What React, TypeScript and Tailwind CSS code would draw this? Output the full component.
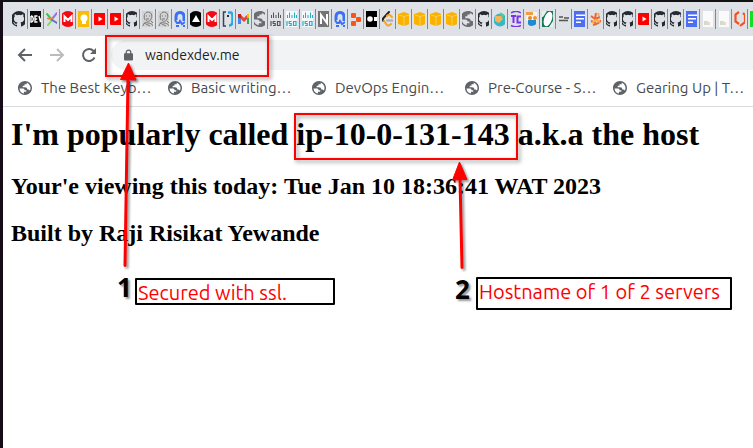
import React from "react";

type Kind =
  | "github" | "dev" | "spark" | "mega" | "keep" | "youtube" | "sketch" | "hash"
  | "triangle" | "bracket" | "gmail" | "globe" | "cisco" | "ciscoBlue" | "notion"
  | "shapes" | "dots" | "leetcode" | "cube" | "island" | "tc" | "people" | "leaf"
  | "words" | "form" | "splash" | "doc" | "hex" | "green";

const tabs: Kind[] = [
  "github", "dev", "spark", "mega", "keep", "youtube", "youtube", "github", "sketch", "sketch",
  "hash", "triangle", "mega", "bracket", "gmail", "globe", "cisco", "ciscoBlue", "ciscoBlue",
  "notion", "hash", "shapes", "dots", "leetcode", "cube", "cube", "cube", "cube", "globe",
  "github", "island", "tc", "people", "leaf", "words", "form", "splash", "github", "github",
  "youtube", "github", "github", "form", "doc", "doc", "hex", "green",
];

const globePath =
  "M12 2C6.48 2 2 6.48 2 12s4.48 10 10 10 10-4.48 10-10S17.52 2 12 2zM4.2 12.6h4.1c2 0 3 .9 3.200 2.500h2.300v2.300h-3.300v2.500C7 19.400 4.400 16.600 4.200 12.600zM19 15.700c-.6-1-1.500-1.500-2.600-1.500h-1.100c0-2-1.200-3.100-3.300-3.100H8.700V8.700h2.600V6.500h3.100V4.400c3.200 1 5.500 4 5.500 7.600 0 1.300-.3 2.600-.9 3.700z";

function Globe({ className }: { className: string }) {
  return (
    <svg viewBox="2 2 20 20" className={className} fill="#5f6368" aria-hidden="true">
      <path d={globePath} />
    </svg>
  );
}

function drawing(kind: Kind) {
  switch (kind) {
    case "github":
      return <path fill="#24292f" d="M8 0a8 8 0 0 0-2.530 15.590c.4.070.550-.170.550-.380v-1.490c-2.230.480-2.700-.950-2.700-.950-.360-.920-.890-1.170-.890-1.170-.730-.500.050-.490.050-.490.810.060 1.230.830 1.230.830.720 1.230 1.870.870 2.330.660.070-.520.280-.870.510-1.070-1.780-.200-3.640-.890-3.640-3.950 0-.870.310-1.590.820-2.150-.080-.200-.360-1.020.080-2.120 0 0 .670-.220 2.200.820a7.600 7.600 0 0 1 4 0c1.530-1.040 2.200-.820 2.200-.820.440 1.100.160 1.920.080 2.120.510.560.820 1.270.820 2.150 0 3.070-1.870 3.750-3.650 3.950.290.250.540.730.540 1.480v2.200c0 .210.150.460.550.380A8 8 0 0 0 8 0z" />;
    case "dev":
      return <><path fill="#0a0a0a" d="M0 0h16v16H0z" /><path fill="none" stroke="#fff" strokeWidth="1.400" d="M3 5v6c3 .2 3-6.200 0-6M9.500 5H7v6h2.500M7 8h2.200M11 5l1.500 6L14 5" /></>;
    case "spark":
      return <g fill="none" strokeWidth="2" strokeLinecap="round"><path stroke="#7edc4e" d="M8 9l-4 5" /><path stroke="#9b6fe0" d="M8 8l5-6" /><path stroke="#3ac748" d="M3 3l5 6" /><path stroke="#ef7f4e" d="M8 8l-4-.5" /><path stroke="#5b76c9" d="M8 9l5 3" /></g>;
    case "mega":
      return <><circle cx="8" cy="8" r="8" fill="#f10a12" /><path fill="none" stroke="#fff" strokeWidth="2" d="M4.500 11V5.500L8 9l3.500-3.500V11" /></>;
    case "keep":
      return <><path fill="#fbbc04" d="M2 0h12v16H2z" /><circle cx="8" cy="7" r="3.500" fill="#fff" /><path fill="#fff" d="M6 10h4v3H6z" /></>;
    case "youtube":
      return <><rect x="2" y="2" width="12" height="12" rx="1" fill="#f00" /><path fill="#fff" d="M6.500 5.500l4 2.500-4 2.500z" /></>;
    case "sketch":
      return <g><path fill="#d2d2d2" d="M2 0h12v16H2z" /><path fill="none" stroke="#777" d="M5 9c-2-4 0-8 3-8s5 3 3 7c-1 3-4 3-5 1M3 15c1-4 3-4 5-3s4 0 5 3M6 5h1M9 5h1M6 8h3M4 12l6 3M11 10l2 2" /></g>;
    case "hash":
      return <g fill="none" stroke="#3970f5" strokeWidth="3"><path d="M4 9V6c0-3 1.500-4.500 4-4.500S12 3 12 6v4" /><path strokeWidth="2" d="M3 9l2 3h2l1-2 2 3 3-2M4 15h3M11 15h2" /></g>;
    case "triangle":
      return <><circle cx="8" cy="8" r="8" /><path fill="#fff" d="M8 4l4 7H4z" /></>;
    case "bracket":
      return <g fill="none"><path stroke="#345" strokeWidth="1.500" d="M6 1H3.500v14H6" /><path stroke="#26a9e0" strokeWidth="2.500" d="M8 1.500h2.500c2 0 2 2 2 4v5c0 3-1 4-3.500 4" /><path stroke="#234" strokeWidth="2" d="M8 4v2" /></g>;
    case "gmail":
      return <g fill="none" strokeWidth="3"><path stroke="#4285f4" d="M3.500 13V5" /><path stroke="#34a853" d="M12.500 13V6" /><path stroke="#ea4335" d="M3 4l5 5 5-5" /><path stroke="#c5221f" d="M3.500 3v4" /><path stroke="#fbbc04" d="M12.500 3v4" /></g>;
    case "globe":
      return <g fill="#6b6d71" transform="scale(.8) translate(-2 -2)"><path d={globePath} /></g>;
    case "cisco":
    case "ciscoBlue": {
      const c = kind === "cisco" ? "#555" : "#25aeca";
      return <g fill="none" stroke={c}>{kind === "ciscoBlue" && <path stroke="none" fill="#f3f8fa" d="M0 0h16v16H0z" />}<path d="M3.500 4v3M5.500 1.500V7M8 4v3M10.500 1.500V7M12.500 4v3" /><path strokeWidth="1.200" d="M3 10v5M7.500 10.500H5.200v2h2v2H5M12 10.500H9.500v4H12z" /></g>;
    }
    case "notion":
      return <><path fill="#737373" d="M2 0h12v16H2z" /><path fill="none" stroke="#fff" strokeWidth="2" d="M5 13V4l6 8V3" /></>;
    case "shapes":
      return <g fill="#fb5418"><rect x="3" y="2" width="5" height="5" rx="1" /><rect x="8" y="6" width="5" height="5" rx="1" /><rect x="3" y="10" width="5" height="5" rx="1" /></g>;
    case "dots":
      return <><path d="M0 0h16v16H0z" /><circle cx="6" cy="8" r="2.800" fill="#fff" /><path fill="#fff" d="M10 6h6v4h-6z" /></>;
    case "leetcode":
      return <g fill="none" strokeWidth="2" strokeLinecap="round"><path stroke="#222" d="M9 1L3.500 7c-1 1-1 2 0 3" /><path stroke="#f5a623" d="M4 10l3 4c1 1 2 1 4-1M7 5c2-2 3-1 5 1" /><path stroke="#aaa" d="M7 9.500h6" /></g>;
    case "cube":
      return <><path fill="#f9b200" d="M2 3l6-2 6 2v10l-6 2-6-2z" /><path fill="none" stroke="#f7cf65" d="M3 4l5 1.500L13 4M8 6v9" /></>;
    case "island":
      return <><circle cx="8" cy="9" r="6.500" fill="#35b9c7" /><path fill="#f5b45c" d="M3 5h6l2 3-4 4-4-2z" /><path fill="#5cc98c" d="M8 1l5 3-3 3z" /></>;
    case "tc":
      return <g fill="none" stroke="#7a35e8" strokeWidth="2"><path d="M3 5h5M5.500 5v7M13 5.500H9.500v6H13" /><path strokeWidth="1.400" d="M3 2c3-2 7-2 10 0M3 14.500c3 1.500 7 1.500 10 0" /></g>;
    case "people":
      return <><path fill="#f4f4f4" d="M2 1h11v9H2z" /><path fill="#f59b42" d="M2 1h7v3H2z" /><circle cx="6" cy="7" r="2" fill="#ef861d" /><circle cx="11" cy="7" r="2" fill="#f6941e" /><path fill="#1c8bd0" d="M4 9h8v4c-1 2-7 3-8 0z" /></>;
    case "leaf":
      return <><path fill="#167953" d="M2 0h12v16H2z" /><path fill="#e8f0ed" d="M2 0h5L3 6H2zM14 16H9l4-6h1z" /><ellipse cx="8" cy="8" rx="3.800" ry="7.500" fill="#fff" transform="rotate(20 8 8)" /></>;
    case "words":
      return <path fill="none" stroke="#555" strokeWidth="1.500" d="M3 6h4M8 7h6M3 9.500h9" />;
    case "form":
      return <><path fill="#4c6ef5" d="M2 0h12v16H2z" /><path fill="#fff" d="M4 3.500h10v1.500H4zM4 7h8v1.500H4zM4 10.500h5V12H4z" /></>;
    case "splash":
      return <g fill="none" stroke="#ef6533" strokeWidth="2"><path d="M3 5l4 3 1-6M7 8l5-2M5 14c4-1 7-2 8-5M3 10l5 2" /><path stroke="#f6b13a" d="M4 12l4-3 4 2M10 2l1 3" /></g>;
    case "doc":
      return <><path fill="#fafafa" d="M3 0h10v16H3z" /><path fill="#d3dccb" d="M4 10h4v4H4z" /><path fill="#ecd3d4" d="M7 11h3v3H7z" /></>;
    case "hex":
      return <path fill="none" stroke="#f4511e" strokeWidth="2.200" d="M7 1L3.500 3.500v7L7 13M8 15l5-4V4l-2-2" />;
    case "green":
      return <><path fill="#13de25" d="M0 0h16v16H0z" /><path fill="#fff" d="M6 5h6v6H6z" /></>;
  }
}

const bookmarks = [
  { label: "The Best Keyb…", width: "w-[150px]" },
  { label: "Basic writing…", width: "w-36" },
  { label: "DevOps Engin…", width: "w-[153px]" },
  { label: "Pre-Course - S…", width: "w-[148px]" },
  { label: "Gearing Up | T…", width: "w-36" },
];

const uiFont = "font-['Ubuntu','Noto_Sans',sans-serif]";

function TabStrip() {
  return (
    <div role="tablist" className="flex h-[34px] overflow-hidden bg-[#dee1e6] pt-[7px] pl-[9px]">
      {tabs.map((kind, i) => (
        <button
          key={i}
          type="button"
          role="tab"
          aria-label={`Tab ${i + 1}`}
          className="group flex h-5 w-[16px] shrink-0 items-center justify-end border-r border-[#85878c] pr-[2px]"
        >
          <span className="flex w-[11px] justify-center overflow-hidden group-first:w-[13px]">
            <svg viewBox="0 0 16 16" className="size-4 shrink-0">{drawing(kind)}</svg>
          </span>
        </button>
      ))}
    </div>
  );
}

function Toolbar() {
  return (
    <div className="flex items-center pt-1 pl-[14px]">
      <div className="flex gap-4">
        <button type="button" aria-label="Back" className="size-4">
          <svg viewBox="0 0 16 16" fill="none" stroke="#5f6368" strokeWidth="2"><path d="M15 8H2M8 2L2 8l6 6" /></svg>
        </button>
        <button type="button" aria-label="Forward" className="size-4">
          <svg viewBox="0 0 16 16" fill="none" stroke="#babcbe" strokeWidth="2"><path d="M1 8h13M8 2l6 6-6 6" /></svg>
        </button>
        <button type="button" aria-label="Reload" className="size-4">
          <svg viewBox="0 0 16 16" fill="none" stroke="#5f6368" strokeWidth="2"><path d="M13.500 10.500A6 6 0 1 1 12.500 4L14 5.500" /><path fill="#5f6368" stroke="none" d="M15 1v6H9z" /></svg>
        </button>
      </div>
      <label className="ml-[14px] flex h-[30px] flex-1 items-center gap-3 rounded-l-full bg-[#f1f3f4] pl-[13px]">
        <svg viewBox="0 0 10 12" className="h-3 w-[9px] shrink-0" aria-hidden="true">
          <rect y="4" width="10" height="8" rx="1" fill="#5f6368" />
          <path d="M2.500 5V3a2.500 2.500 0 0 1 5 0v2" fill="none" stroke="#5f6368" strokeWidth="1.400" />
        </svg>
        <input
          type="text"
          aria-label="Address"
          defaultValue="wandexdev.me"
          className={`min-w-0 flex-1 bg-transparent text-[14px] text-[#202124] outline-none ${uiFont}`}
        />
      </label>
    </div>
  );
}

function BookmarksBar() {
  return (
    <nav className={`flex h-9 overflow-hidden pl-[15px] text-[15px] leading-[36px] text-[#474a4e] ${uiFont}`}>
      {bookmarks.map((b) => (
        <a key={b.label} href="#" className={`flex shrink-0 items-center gap-[9px] whitespace-nowrap ${b.width}`}>
          <Globe className="size-[14px] shrink-0" />
          {b.label}
        </a>
      ))}
    </nav>
  );
}

function Annotations() {
  return (
    <div className={uiFont}>
      <div className="absolute top-[35px] left-[105px] h-[42px] w-[164px] border-2 border-[#f00] drop-shadow-[2px_2px_2px_rgba(0,0,0,0.45)]" />
      <div className="absolute top-[113px] left-[294px] h-[47px] w-[224px] border-2 border-[#f00] drop-shadow-[2px_2px_2px_rgba(0,0,0,0.45)]" />
      <svg viewBox="0 0 753 448" className="pointer-events-none absolute top-0 left-0 h-[448px] w-[753px] drop-shadow-[2px_2px_1px_rgba(0,0,0,0.4)]" aria-hidden="true">
        <g stroke="#f00" strokeWidth="3" strokeLinecap="round">
          <path d="M125 265.500L128 78" />
          <path d="M462 267.500L460 178" />
        </g>
        <g fill="#f00" stroke="#f00" strokeLinejoin="round">
          <path d="M128.500 63l7.500 17-15.500-.5z" />
          <path d="M459.500 162l7.500 17.500-14.500.5z" />
        </g>
      </svg>
      <span className="absolute top-[271px] left-[117px] font-['Open_Sans',sans-serif] text-[26px] leading-8 font-bold text-shadow-[2px_2px_2px_rgba(0,0,0,0.4)]">1</span>
      <p className="absolute top-[278px] left-[135px] h-[27px] w-[200px] rounded-[1px] border-2 border-black pl-px text-[20px] leading-[25px] whitespace-nowrap text-[#f00]">Secured with ssl.</p>
      <span className="absolute top-[273px] left-[455px] font-['Open_Sans',sans-serif] text-[26px] leading-8 font-bold text-shadow-[2px_2px_2px_rgba(0,0,0,0.4)]">2</span>
      <p className="absolute top-[277px] left-[476px] h-[33px] w-[256px] rounded-[1px] border-2 border-black pl-px text-[20px] leading-[25px] whitespace-nowrap text-[#f00]">Hostname of 1 of 2 servers</p>
    </div>
  );
}

export default function App() {
  return (
    <div className="relative min-h-screen overflow-hidden border-t-2 border-l-[3px] border-t-[#111112] border-l-[#160c18] bg-white">
      <header className="border-b border-[#dadce0]">
        <TabStrip />
        <Toolbar />
        <BookmarksBar />
      </header>
      <main className="flex flex-col gap-5 p-2 font-['Liberation_Serif',serif] font-bold whitespace-nowrap text-black">
        <h1 className="text-[32px] leading-[38px]">I'm popularly called ip-10-0-131-143 a.k.a the host</h1>
        <h2 className="text-[24px] leading-[27px]">Your'e viewing this today: Tue Jan 10 18:36:41 WAT 2023</h2>
        <h2 className="text-[24px] leading-[27px]">Built by Raji Risikat Yewande</h2>
      </main>
      <div className="absolute -top-[2px] -left-[3px]">
        <Annotations />
      </div>
    </div>
  );
}
